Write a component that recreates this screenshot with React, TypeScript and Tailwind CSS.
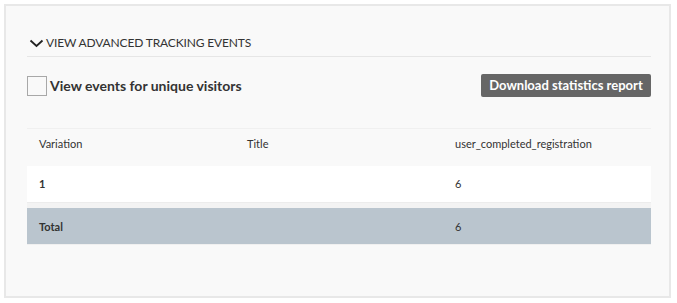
import React from 'react';

const rows = [{ variation: '1', title: '', count: '6' }];

export default function App() {
  return (
    <div className="w-[677px] h-[303px] bg-white pt-[4px] pl-[4px]" style={{ fontFamily: 'Lato, "Liberation Sans", sans-serif' }}>
      <div className="w-[667px] h-[294px] border-2 border-[#e8e8e8] bg-[#f9f9f9] pl-[21px] pr-[18px] pt-[26px] text-[#333]">
        <div className="flex items-center h-[22px] gap-[3px] text-[12px] tracking-[-0.15px]">
          <svg width="15" height="14" viewBox="0 0 15 14" className="ml-[2px]">
            <path d="M1.5 4.5 L7.5 10 L13.5 4.5" fill="none" stroke="#222" strokeWidth="1.8" />
          </svg>
          <span className="-ml-[1px]">VIEW ADVANCED TRACKING EVENTS</span>
        </div>
        <div className="mt-[2px] border-t border-[#e6e6e6]" />

        <div className="flex items-center justify-between mt-[17px] h-[23px]">
          <label className="flex items-center gap-[3px]">
            <span className="w-[20px] h-[20px] border border-[#a8a8a8] bg-[#f9f9f9]" />
            <span className="text-[14px] font-bold text-[#333]">View events for unique visitors</span>
          </label>
          <button className="h-[23px] w-[170px] rounded-[2px] bg-[#666] text-white text-[13px] font-bold">
            Download statistics report
          </button>
        </div>

        <div className="mt-[31px] text-[11px]">
          <div className="grid grid-cols-3 h-[38px] items-center pb-[6px] border-t border-[#f0f0f0]">
            <div className="pl-[12px]">Variation</div>
            <div className="pl-[12px]">Title</div>
            <div className="pl-[12px]">user_completed_registration</div>
          </div>
          {rows.map((r) => (
            <div key={r.variation} className="grid grid-cols-3 h-[37px] items-center pt-[1px] bg-white border-b border-[#ececec]">
              <div className="pl-[12px] font-bold">{r.variation}</div>
              <div className="pl-[12px]">{r.title}</div>
              <div className="pl-[12px]">{r.count}</div>
            </div>
          ))}
          <div className="h-[5px] bg-[#f3f3f3]" />
          <div className="grid grid-cols-3 h-[37px] items-center pt-[2px] bg-[#bac5ce] border-b border-[#f0f0f0]">
            <div className="pl-[12px] font-bold">Total</div>
            <div className="pl-[12px]" />
            <div className="pl-[12px]">6</div>
          </div>
        </div>
      </div>
    </div>
  );
}
